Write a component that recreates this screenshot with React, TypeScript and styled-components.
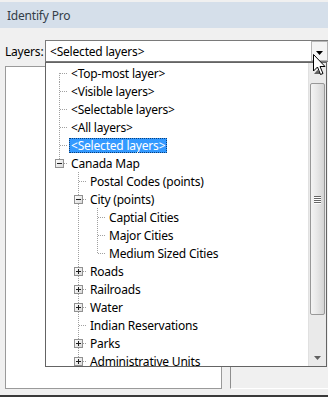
import styled, { createGlobalStyle } from 'styled-components';

const GlobalStyle = createGlobalStyle`
	html, body {
		margin: 0;
		padding: 0;
		overflow: hidden;
		background: #ffffff;
	}
`;

type Guide = 'none' | 'line' | 'tee' | 'elbow' | 'first';

interface TreeRow {
	label: string;
	guides: Guide[];
	expander?: 'plus' | 'minus';
	selected?: boolean;
}

const rows: TreeRow[] = [
	{ label: '<Top-most layer>', guides: ['first'] },
	{ label: '<Visible layers>', guides: ['tee'] },
	{ label: '<Selectable layers>', guides: ['tee'] },
	{ label: '<All layers>', guides: ['tee'] },
	{ label: '<Selected layers>', guides: ['tee'], selected: true },
	{ label: 'Canada Map', guides: ['elbow'], expander: 'minus' },
	{ label: 'Postal Codes (points)', guides: ['none', 'tee'] },
	{ label: 'City (points)', guides: ['none', 'tee'], expander: 'minus' },
	{ label: 'Captial Cities', guides: ['none', 'line', 'tee'] },
	{ label: 'Major Cities', guides: ['none', 'line', 'tee'] },
	{ label: 'Medium Sized Cities', guides: ['none', 'line', 'elbow'] },
	{ label: 'Roads', guides: ['none', 'tee'], expander: 'plus' },
	{ label: 'Railroads', guides: ['none', 'tee'], expander: 'plus' },
	{ label: 'Water', guides: ['none', 'tee'], expander: 'plus' },
	{ label: 'Indian Reservations', guides: ['none', 'tee'] },
	{ label: 'Parks', guides: ['none', 'tee'], expander: 'plus' },
	{ label: 'Administrative Units', guides: ['none', 'tee'], expander: 'plus' },
];

const StyledWindow = styled.div`
	position: relative;
	width: 328px;
	height: 397px;
	box-sizing: border-box;
	background: #f0f0f0;
	border-bottom: 2px solid #3a3a3a;
	font-family: 'Segoe UI', 'Noto Sans', sans-serif;
	font-size: 12px;
	letter-spacing: -0.2px;
	color: #000;
	display: flex;
	flex-direction: column;
	overflow: hidden;
`;

const StyledTitleBar = styled.div`
	margin-top: 2px;
	height: 26px;
	background: #d5dfea;
	display: flex;
	align-items: center;
	padding-left: 7px;
	color: #333d48;
	flex-shrink: 0;
`;

const StyledToolbar = styled.div`
	display: flex;
	align-items: center;
	margin-top: 12px;
	padding-left: 5px;
	height: 22px;
	flex-shrink: 0;
`;

const StyledLabel = styled.span`
	width: 40px;
`;

const StyledCombo = styled.div`
	flex: 1;
	height: 22px;
	box-sizing: border-box;
	border: 1px solid #7a7a7a;
	border-right: none;
	background: #fff;
	display: flex;
	align-items: center;
	padding-left: 4px;
`;

const StyledComboText = styled.span`
	flex: 1;
`;

const StyledComboButton = styled.div`
	width: 17px;
	height: 20px;
	box-sizing: border-box;
	border: 1px solid #b5b5b5;
	background: #f4f4f4;
	display: flex;
	align-items: center;
	justify-content: center;
	padding-top: 3px;
`;

const StyledBody = styled.div`
	flex: 1;
	display: flex;
	margin-top: 4px;
	margin-bottom: 6px;
`;

const StyledLeftPanel = styled.div`
	margin-left: 5px;
	width: 217px;
	box-sizing: border-box;
	background: #fff;
	border: 1px solid #9a9a9a;
`;

const StyledRightPanel = styled.div`
	flex: 1;
	margin-left: 8px;
	border-left: 1px solid #8e8e8e;
	border-bottom: 1px solid #ffffff;
	background: #f0f0f0;
`;

const StyledDropdown = styled.div`
	position: absolute;
	left: 45px;
	top: 62px;
	width: 282px;
	height: 305px;
	box-sizing: border-box;
	border: 1px solid #646464;
	background: #fff;
	display: flex;
`;

const StyledTree = styled.div`
	flex: 1;
	overflow: hidden;
	padding: 1px 0 0 4px;
`;

const StyledRow = styled.div`
	display: flex;
	align-items: center;
	height: 18px;
	white-space: nowrap;
`;

const StyledItem = styled.span<{ $selected?: boolean }>`
	display: flex;
	align-items: center;
	height: 15px;
	padding: 0 2px;
	box-sizing: border-box;
	background: ${(p) => (p.$selected ? '#3399ff' : 'transparent')};
	color: ${(p) => (p.$selected ? '#fff' : '#000')};
	outline: ${(p) => (p.$selected ? '1px dotted #0b3f7a' : 'none')};
	outline-offset: -1px;
`;

const StyledScrollbar = styled.div`
	width: 17px;
	display: flex;
	flex-direction: column;
	background: #eaeaea;
	border-left: 1px solid #e0e0e0;
`;

const StyledScrollButton = styled.div`
	height: 17px;
	display: flex;
	align-items: center;
	justify-content: center;
	flex-shrink: 0;
`;

const StyledTrack = styled.div`
	flex: 1;
	padding-top: 3px;
`;

const StyledThumb = styled.div`
	margin: 0 1px 0 1px;
	height: 232px;
	box-sizing: border-box;
	border: 1px solid #989898;
	border-radius: 2px;
	background: linear-gradient(to right, #f4f4f4, #e8e8e8 45%, #d4d4d4);
	display: flex;
	align-items: center;
	justify-content: center;
`;

const StyledGrip = styled.div`
	display: flex;
	flex-direction: column;
	gap: 1px;
`;

const StyledGripLine = styled.div`
	width: 7px;
	height: 1px;
	background: #666;
	box-shadow: 0 1px 0 #fff;
`;

const StyledCursor = styled.svg`
	position: absolute;
	left: 313px;
	top: 54px;
`;

function GuideCell({ kind, expander }: { kind: Guide; expander?: 'plus' | 'minus' }) {
	const dash = '1 1';
	const stroke = '#a0a0a0';
	let vertical: [number, number] | null = null;
	if (kind === 'line' || kind === 'tee') vertical = [0, 18];
	if (kind === 'elbow') vertical = [0, 9];
	if (kind === 'first') vertical = [9, 18];
	const horizontal = kind === 'tee' || kind === 'elbow' || kind === 'first';
	return (
		<svg width="19" height="18" style={{ flexShrink: 0, display: 'block' }}>
			<defs>
				<linearGradient id="boxfill" x1="0" y1="0" x2="1" y2="1">
					<stop offset="0" stopColor="#ffffff" />
					<stop offset="1" stopColor="#d8d8d8" />
				</linearGradient>
			</defs>
			{vertical && (
				<line x1="9.5" y1={vertical[0]} x2="9.5" y2={vertical[1]} stroke={stroke} strokeDasharray={dash} />
			)}
			{horizontal && (
				<line x1={expander ? 14 : 10} y1="9.5" x2="18" y2="9.5" stroke={stroke} strokeDasharray={dash} />
			)}
			{expander && (
				<>
					<rect x="5.5" y="5.5" width="8" height="8" fill="url(#boxfill)" stroke="#919191" />
					<line x1="7" y1="9.5" x2="12" y2="9.5" stroke="#1e1e1e" />
					{expander === 'plus' && <line x1="9.5" y1="7" x2="9.5" y2="12" stroke="#1e1e1e" />}
				</>
			)}
		</svg>
	);
}

function LayerTree() {
	return (
		<StyledTree>
			{rows.map((row) => (
				<StyledRow key={row.label}>
					{row.guides.map((g, i) => (
						<GuideCell
							key={i}
							kind={g}
							expander={i === row.guides.length - 1 ? row.expander : undefined}
						/>
					))}
					<StyledItem $selected={row.selected}>{row.label}</StyledItem>
				</StyledRow>
			))}
		</StyledTree>
	);
}

function Arrow({ up, color }: { up?: boolean; color: string }) {
	return (
		<svg width="7" height="4" style={{ display: 'block' }}>
			<polygon points={up ? '0,4 7,4 3.5,0' : '0,0 7,0 3.5,4'} fill={color} />
		</svg>
	);
}

export default function App() {
	return (
		<>
			<GlobalStyle />
			<StyledWindow>
				<StyledTitleBar>Identify Pro</StyledTitleBar>
				<StyledToolbar>
					<StyledLabel>Layers:</StyledLabel>
					<StyledCombo>
						<StyledComboText>&lt;Selected layers&gt;</StyledComboText>
						<StyledComboButton>
							<Arrow color="#000" />
						</StyledComboButton>
					</StyledCombo>
				</StyledToolbar>
				<StyledBody>
					<StyledLeftPanel />
					<StyledRightPanel />
				</StyledBody>

				<StyledDropdown>
					<LayerTree />
					<StyledScrollbar>
						<StyledScrollButton>
							<Arrow up color="#606060" />
						</StyledScrollButton>
						<StyledTrack>
							<StyledThumb>
								<StyledGrip>
									<StyledGripLine />
									<StyledGripLine />
									<StyledGripLine />
									<StyledGripLine />
								</StyledGrip>
							</StyledThumb>
						</StyledTrack>
						<StyledScrollButton>
							<Arrow color="#606060" />
						</StyledScrollButton>
					</StyledScrollbar>
				</StyledDropdown>

				<StyledCursor width="14" height="22" viewBox="0 0 14 22">
					<polygon
						points="0.5,0.5 0.5,17 4.5,13 7.5,20.5 10,19.5 7,12.5 12,12.5"
						fill="#fff"
						stroke="#000"
						strokeLinejoin="miter"
					/>
				</StyledCursor>
			</StyledWindow>
		</>
	);
}
